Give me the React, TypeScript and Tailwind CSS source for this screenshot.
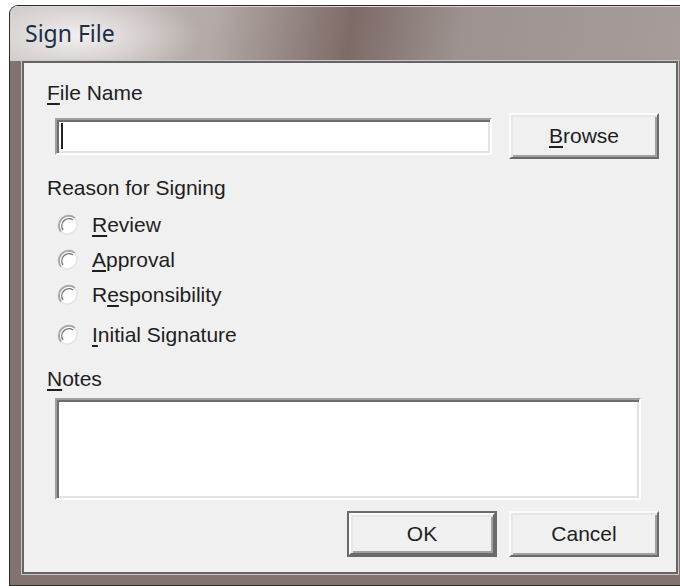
const label = "font-['Liberation_Sans',Arial,sans-serif] text-[21px] leading-[24px] text-[#1e1e1e]";

// sunken edit box, classic 3D edges
const sunken =
  "bg-white border-2 border-t-[#a0a0a0] border-l-[#a0a0a0] border-b-white border-r-white shadow-[inset_2px_2px_0_#6e6e6e,inset_-2px_-2px_0_#e3e3e3]";

// raised push button edges
const raised =
  "bg-[#f0f0f0] border-2 border-t-[#fbfbfb] border-l-[#fbfbfb] border-b-[#6a6a6a] border-r-[#6a6a6a] shadow-[inset_2px_2px_0_#e6e6e6,inset_-2px_-2px_0_#a0a0a0]";

const Key = ({ children }: { children: string }) => (
  <span className="underline decoration-[2px] underline-offset-[3px]">{children}</span>
);

const Radio = () => (
  <svg width="22" height="22" viewBox="0 0 22 22" className="shrink-0">
    <circle cx="11" cy="11" r="9.8" fill="#ffffff" />
    <path d="M4.1 17.9 A9.8 9.8 0 0 1 17.9 4.1" stroke="#a8a8a8" strokeWidth="2" fill="none" />
    <path d="M17.9 4.1 A9.8 9.8 0 0 1 4.1 17.9" stroke="#e6e6e6" strokeWidth="2" fill="none" />
    <path d="M6 16 A7.2 7.2 0 0 1 16 6" stroke="#7a7a7a" strokeWidth="1.4" fill="none" />
  </svg>
);

const Choice = ({ className, children }: { className: string; children: React.ReactNode }) => (
  <div className={`flex items-center h-[24px] pl-[10px] gap-[13px] ${className}`}>
    <Radio />
    <span className={label}>{children}</span>
  </div>
);

const Button = ({ children, isDefault }: { children: React.ReactNode; isDefault?: boolean }) =>
  isDefault ? (
    <div className="w-[150px] h-[46px] border-2 border-[#6a6a6a]">
      <div className={`w-full h-full flex items-center justify-center ${raised}`}>
        <span className={label}>{children}</span>
      </div>
    </div>
  ) : (
    <div className={`w-[150px] h-[46px] flex items-center justify-center ${raised}`}>
      <span className={label}>{children}</span>
    </div>
  );

export default function App() {
  return (
    <div className="w-[680px] h-[586px] bg-white overflow-hidden pt-[5px] pl-[9px]">
      <div className="w-[682px] h-[581px] rounded-tl-[9px] border-l border-t border-b border-[#2e2a29] bg-[#837370] overflow-hidden">
        {/* caption */}
        <div className="h-[55px] flex items-center pl-[15px] bg-[radial-gradient(ellipse_120px_48px_at_70px_30px,rgba(255,255,255,0.78),rgba(255,255,255,0)),linear-gradient(100deg,#cac3c1_0%,#b3a9a6_30%,#7d6b67_50%,#9d928f_66%,#a69d9a_100%)] shadow-[inset_0_1px_0_#ddd6d3]">
          <span className="font-['Noto_Sans','Open_Sans',sans-serif] text-[23px] leading-none text-[#1c2d48]">
            Sign File
          </span>
        </div>

        <div className="pl-[12px] pb-[10px]">
          <div className="w-[656px] h-[513px] bg-[#f0f0f0] border-2 border-[#656565] shadow-[0_0_0_1px_#cec6c3]">
            <div className="flex flex-col pl-[23px] pr-[17px] pt-[18px]">
              <div className={label}>
                <Key>F</Key>ile Name
              </div>

              <div className="mt-[8px] flex items-center pl-[8px] gap-[17px]">
                <div className={`flex-1 h-[37px] flex items-center pl-[4px] ${sunken}`}>
                  <div className="w-[2px] h-[26px] bg-[#222]" />
                </div>
                <Button>
                  <Key>B</Key>rowse
                </Button>
              </div>

              <div className={`mt-[17px] ${label}`}>Reason for Signing</div>

              <Choice className="mt-[13px]">
                <Key>R</Key>eview
              </Choice>
              <Choice className="mt-[11px]">
                <Key>A</Key>pproval
              </Choice>
              <Choice className="mt-[11px]">
                R<Key>e</Key>sponsibility
              </Choice>
              <Choice className="mt-[16px]">
                <Key>I</Key>nitial Signature
              </Choice>

              <div className={`mt-[20px] ${label}`}>
                <Key>N</Key>otes
              </div>
              <div className={`mt-[7px] ml-[8px] w-[586px] h-[102px] ${sunken}`} />

              <div className="mt-[11px] flex justify-end gap-[12px]">
                <Button isDefault>OK</Button>
                <Button>Cancel</Button>
              </div>
            </div>
          </div>
        </div>
      </div>
    </div>
  );
}
